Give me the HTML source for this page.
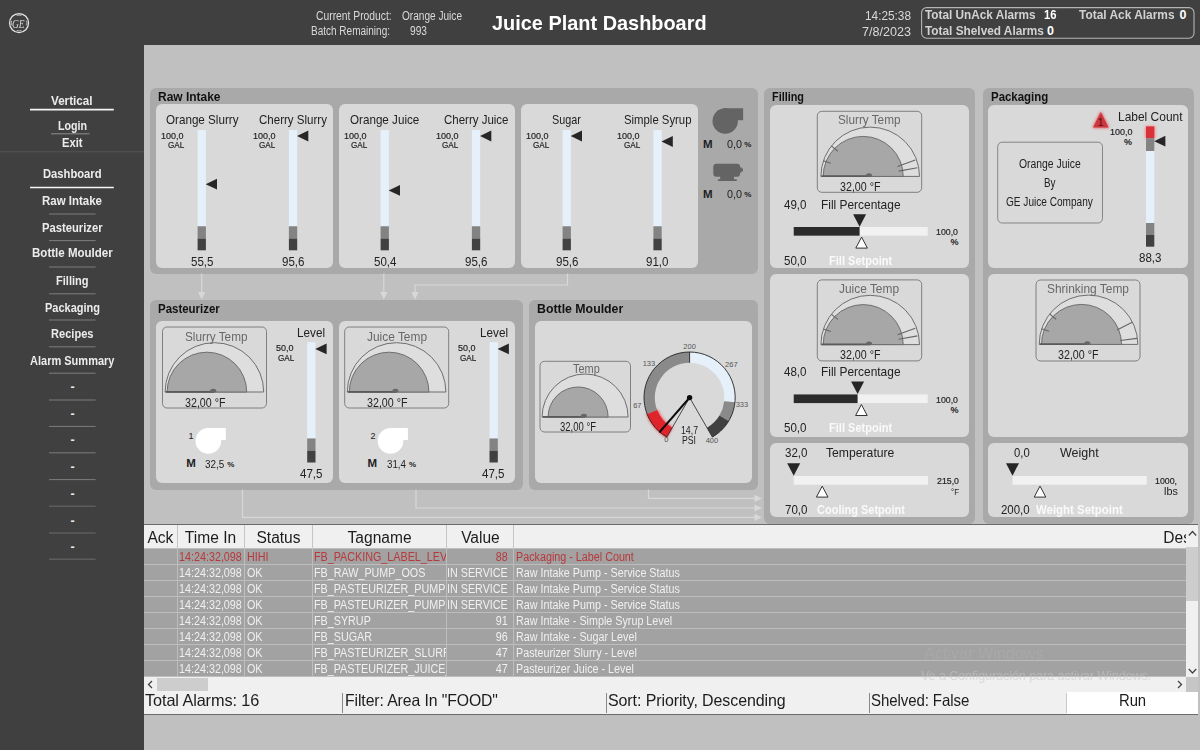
<!DOCTYPE html><html lang="en"><head><meta charset="utf-8"><title>Juice Plant Dashboard</title><style>

html,body{margin:0;padding:0;background:#c0c0c0;}
#root{position:relative;width:1200px;height:750px;overflow:hidden;background:#c0c0c0;font-family:"Liberation Sans",Arial,sans-serif;}
.b{position:absolute;}
.t{position:absolute;white-space:nowrap;line-height:1;transform-origin:0 50%;}
svg.g{position:absolute;left:0;top:0;}
#alarm{position:absolute;left:144px;top:524px;width:1054px;height:191px;background:#f0f0f0;border-top:1px solid #6a6a6a;border-bottom:1px solid #6a6a6a;box-sizing:border-box;overflow:hidden;}
table.al{position:absolute;left:0;top:0;border-collapse:collapse;table-layout:fixed;width:1042px;}
table.al th{height:23px;padding:0;font-weight:normal;font-size:17.3px;color:#1c1c1c;background:#f0f0f0;border-right:1px solid #c6c6c6;text-align:center;white-space:nowrap;overflow:hidden;line-height:23px;}
table.al th span{display:inline-block;position:relative;top:1px;transform:scaleX(0.9);vertical-align:top;height:23px;}
table.al th.de{text-align:right;border-right:none;}
table.al th.de span{margin-right:-59px;}
table.al td{height:15px;padding:0 0 0 1.5px;font-size:12.3px;line-height:15px;color:#f0f0f0;background:#a2a2a2;border-right:1px solid #bdbdbd;border-bottom:1px solid #bdbdbd;white-space:nowrap;overflow:hidden;}
table.al td span{display:inline-block;position:relative;top:0.5px;transform:scaleX(0.875);transform-origin:0 50%;vertical-align:top;height:15px;}
table.al td.vr{text-align:right;padding:0 5px 0 0;}
table.al td.vr span{transform-origin:100% 50%;}
table.al td.vl{padding-left:0;}
table.al tr.red td{color:#b8383c;}
table.al tbody tr:first-child td{border-top:1px solid #bdbdbd;height:14px;}
.sb{position:absolute;background:#f0f0f0;}
.thumb{position:absolute;background:#cdcdcd;}
.st{position:absolute;transform-origin:0 50%;top:165.3px;height:22px;line-height:20px;font-size:16.5px;color:#1c1c1c;white-space:nowrap;letter-spacing:-0.1px;}
.sep{position:absolute;top:168px;width:1px;height:20px;background:#8a8a8a;}
.chev{position:absolute;font-size:11px;line-height:1;color:#444;font-weight:bold;}
.wm{position:absolute;white-space:nowrap;color:#b4b4b4;font-size:14.5px;line-height:1;}

</style></head><body><div id="root">
<div class="b" style="left:0px;top:0px;width:1200px;height:45px;background:#404040;"></div>
<div class="b" style="left:0px;top:0px;width:144px;height:750px;background:#404040;"></div>
<div class="b" style="left:150px;top:88px;width:608px;height:185.6px;background:#a9a9a9;border-radius:6px;"></div>
<div class="b" style="left:150px;top:300px;width:372.8px;height:189.6px;background:#a9a9a9;border-radius:6px;"></div>
<div class="b" style="left:529px;top:300px;width:229px;height:189.6px;background:#a9a9a9;border-radius:6px;"></div>
<div class="b" style="left:764px;top:88px;width:210.8px;height:435.8px;background:#a9a9a9;border-radius:6px;"></div>
<div class="b" style="left:982.5px;top:88px;width:211px;height:435.8px;background:#a9a9a9;border-radius:6px;"></div>
<div class="b" style="left:156.2px;top:104px;width:176.6px;height:163.7px;background:#d9d9d9;border-radius:6px;"></div>
<div class="b" style="left:338.6px;top:104px;width:176.6px;height:163.7px;background:#d9d9d9;border-radius:6px;"></div>
<div class="b" style="left:521px;top:104px;width:176.6px;height:163.7px;background:#d9d9d9;border-radius:6px;"></div>
<div class="b" style="left:156.2px;top:320.5px;width:176.6px;height:162.5px;background:#d9d9d9;border-radius:6px;"></div>
<div class="b" style="left:338.6px;top:320.5px;width:176.6px;height:162.5px;background:#d9d9d9;border-radius:6px;"></div>
<div class="b" style="left:535px;top:320.5px;width:217px;height:162.5px;background:#d9d9d9;border-radius:6px;"></div>
<div class="b" style="left:769.8px;top:105px;width:199.2px;height:162.7px;background:#d9d9d9;border-radius:6px;"></div>
<div class="b" style="left:988.2px;top:105px;width:199.8px;height:162.7px;background:#d9d9d9;border-radius:6px;"></div>
<div class="b" style="left:769.8px;top:273.8px;width:199.2px;height:163.2px;background:#d9d9d9;border-radius:6px;"></div>
<div class="b" style="left:988.2px;top:273.8px;width:199.8px;height:163.2px;background:#d9d9d9;border-radius:6px;"></div>
<div class="b" style="left:769.8px;top:442.5px;width:199.2px;height:74.2px;background:#d9d9d9;border-radius:6px;"></div>
<div class="b" style="left:988.2px;top:442.5px;width:199.8px;height:74.2px;background:#d9d9d9;border-radius:6px;"></div>
<svg class="g" width="1200" height="750" viewBox="0 0 1200 750"><defs><filter id="glow" x="-50%" y="-50%" width="200%" height="200%"><feGaussianBlur stdDeviation="1.8"/></filter></defs>
<rect x="197.6" y="130.0" width="8.3" height="96.3" fill="#e6f0fb"/>
<rect x="197.6" y="226.3" width="8.3" height="12.2" fill="#838383"/>
<rect x="197.6" y="238.5" width="8.3" height="11.8" fill="#414141"/>
<polygon points="205.7,184.2 217.0,178.8 217.0,189.6" fill="#262626"/>
<rect x="288.9" y="130.0" width="8.3" height="96.3" fill="#e6f0fb"/>
<rect x="288.9" y="226.3" width="8.3" height="12.2" fill="#838383"/>
<rect x="288.9" y="238.5" width="8.3" height="11.8" fill="#414141"/>
<polygon points="297.0,136.0 308.3,130.6 308.3,141.4" fill="#262626"/>
<rect x="380.6" y="130.0" width="8.3" height="96.3" fill="#e6f0fb"/>
<rect x="380.6" y="226.3" width="8.3" height="12.2" fill="#838383"/>
<rect x="380.6" y="238.5" width="8.3" height="11.8" fill="#414141"/>
<polygon points="388.7,190.4 400.0,185.0 400.0,195.8" fill="#262626"/>
<rect x="471.9" y="130.0" width="8.3" height="96.3" fill="#e6f0fb"/>
<rect x="471.9" y="226.3" width="8.3" height="12.2" fill="#838383"/>
<rect x="471.9" y="238.5" width="8.3" height="11.8" fill="#414141"/>
<polygon points="480.0,136.0 491.3,130.6 491.3,141.4" fill="#262626"/>
<rect x="562.6" y="130.0" width="8.3" height="96.3" fill="#e6f0fb"/>
<rect x="562.6" y="226.3" width="8.3" height="12.2" fill="#838383"/>
<rect x="562.6" y="238.5" width="8.3" height="11.8" fill="#414141"/>
<polygon points="570.7,136.0 582.0,130.6 582.0,141.4" fill="#262626"/>
<rect x="653.4" y="130.0" width="8.3" height="96.3" fill="#e6f0fb"/>
<rect x="653.4" y="226.3" width="8.3" height="12.2" fill="#838383"/>
<rect x="653.4" y="238.5" width="8.3" height="11.8" fill="#414141"/>
<polygon points="661.5,141.5 672.8,136.1 672.8,146.9" fill="#262626"/>
<rect x="307.2" y="342.2" width="8.3" height="96.3" fill="#e6f0fb"/>
<rect x="307.2" y="438.5" width="8.3" height="12.2" fill="#838383"/>
<rect x="307.2" y="450.7" width="8.3" height="11.8" fill="#414141"/>
<polygon points="315.3,348.9 326.6,343.5 326.6,354.3" fill="#262626"/>
<rect x="489.5" y="342.2" width="8.3" height="96.3" fill="#e6f0fb"/>
<rect x="489.5" y="438.5" width="8.3" height="12.2" fill="#838383"/>
<rect x="489.5" y="450.7" width="8.3" height="11.8" fill="#414141"/>
<polygon points="497.6,348.9 508.9,343.5 508.9,354.3" fill="#262626"/>
<g filter="url(#glow)"><rect x="1145.5" y="126.4" width="9.3" height="11.8" fill="#ff7078"/></g>
<rect x="1146.0" y="126.4" width="8.3" height="11.8" fill="#d9313a"/>
<rect x="1146.0" y="138.2" width="8.3" height="12.8" fill="#838383"/>
<rect x="1146.0" y="151.0" width="8.3" height="72.0" fill="#e6f0fb"/>
<rect x="1146.0" y="223.0" width="8.3" height="12.0" fill="#838383"/>
<rect x="1146.0" y="235.0" width="8.3" height="11.7" fill="#414141"/>
<polygon points="1154.1,141.2 1165.4,135.8 1165.4,146.6" fill="#262626"/>
<rect x="162.5" y="327.0" width="104.0" height="81.0" rx="4.5" fill="#d9d9d9" stroke="#7f7f7f" stroke-width="1"/>
<path d="M165.1,392.0 A49.3,49.3 0 0 1 263.7,392.0 Z" fill="#dedede" stroke="#6e6e6e" stroke-width="1"/>
<path d="M167.1,392.0 A39.8,39.8 0 0 1 246.7,392.0 Z" fill="#a7a7a7" stroke="#6e6e6e" stroke-width="1"/>
<line x1="165.6" y1="391.8" x2="214.4" y2="391.8" stroke="#5a5a5a" stroke-width="1.8"/>
<path d="M210.0,392.0 a3.2,3.2 0 0 1 6.4,0 Z" fill="#666"/>
<rect x="344.7" y="327.0" width="104.0" height="81.0" rx="4.5" fill="#d9d9d9" stroke="#7f7f7f" stroke-width="1"/>
<path d="M347.3,392.0 A49.3,49.3 0 0 1 445.9,392.0 Z" fill="#dedede" stroke="#6e6e6e" stroke-width="1"/>
<path d="M349.3,392.0 A39.8,39.8 0 0 1 428.9,392.0 Z" fill="#a7a7a7" stroke="#6e6e6e" stroke-width="1"/>
<line x1="347.8" y1="391.8" x2="396.6" y2="391.8" stroke="#5a5a5a" stroke-width="1.8"/>
<path d="M392.2,392.0 a3.2,3.2 0 0 1 6.4,0 Z" fill="#666"/>
<rect x="540.0" y="361.3" width="90.5" height="70.7" rx="4.5" fill="#d9d9d9" stroke="#7f7f7f" stroke-width="1"/>
<path d="M542.1,417.0 A43.0,43.0 0 0 1 628.1,417.0 Z" fill="#dedede" stroke="#6e6e6e" stroke-width="1"/>
<path d="M548.1,417.0 A30.0,30.0 0 0 1 608.1,417.0 Z" fill="#a7a7a7" stroke="#6e6e6e" stroke-width="1"/>
<line x1="542.6" y1="416.8" x2="585.1" y2="416.8" stroke="#5a5a5a" stroke-width="1.8"/>
<path d="M580.7,417.0 a3.2,3.2 0 0 1 6.4,0 Z" fill="#666"/>
<rect x="817.3" y="111.3" width="104.4" height="81.0" rx="4.5" fill="#d9d9d9" stroke="#7f7f7f" stroke-width="1"/>
<path d="M820.9,176.4 A49.3,49.3 0 0 1 919.5,176.4 Z" fill="#dedede" stroke="#6e6e6e" stroke-width="1"/>
<path d="M823.2,176.4 A40.0,40.0 0 0 1 903.2,176.4 Z" fill="#a7a7a7" stroke="#6e6e6e" stroke-width="1"/>
<line x1="830.8" y1="163.2" x2="823.3" y2="160.7" stroke="#666" stroke-width="1.1"/>
<line x1="837.9" y1="151.2" x2="831.2" y2="145.9" stroke="#666" stroke-width="1.1"/>
<line x1="897.5" y1="166.5" x2="915.3" y2="160.0" stroke="#666" stroke-width="1.1"/>
<line x1="898.7" y1="171.1" x2="917.4" y2="167.7" stroke="#666" stroke-width="1.1"/>
<line x1="821.4" y1="176.2" x2="870.2" y2="176.2" stroke="#5a5a5a" stroke-width="1.8"/>
<path d="M865.8,176.4 a3.2,3.2 0 0 1 6.4,0 Z" fill="#666"/>
<rect x="817.3" y="279.9" width="104.4" height="81.0" rx="4.5" fill="#d9d9d9" stroke="#7f7f7f" stroke-width="1"/>
<path d="M820.9,344.6 A49.3,49.3 0 0 1 919.5,344.6 Z" fill="#dedede" stroke="#6e6e6e" stroke-width="1"/>
<path d="M823.2,344.6 A40.0,40.0 0 0 1 903.2,344.6 Z" fill="#a7a7a7" stroke="#6e6e6e" stroke-width="1"/>
<line x1="830.8" y1="331.4" x2="823.3" y2="328.9" stroke="#666" stroke-width="1.1"/>
<line x1="837.9" y1="319.4" x2="831.2" y2="314.1" stroke="#666" stroke-width="1.1"/>
<line x1="897.5" y1="334.7" x2="915.3" y2="328.2" stroke="#666" stroke-width="1.1"/>
<line x1="898.7" y1="339.3" x2="917.4" y2="335.9" stroke="#666" stroke-width="1.1"/>
<line x1="821.4" y1="344.4" x2="870.2" y2="344.4" stroke="#5a5a5a" stroke-width="1.8"/>
<path d="M865.8,344.6 a3.2,3.2 0 0 1 6.4,0 Z" fill="#666"/>
<rect x="1036.0" y="280.0" width="104.0" height="81.0" rx="4.5" fill="#d9d9d9" stroke="#7f7f7f" stroke-width="1"/>
<path d="M1039.2,344.4 A49.3,49.3 0 0 1 1137.8,344.4 Z" fill="#dedede" stroke="#6e6e6e" stroke-width="1"/>
<path d="M1041.5,344.4 A40.0,40.0 0 0 1 1121.5,344.4 Z" fill="#a7a7a7" stroke="#6e6e6e" stroke-width="1"/>
<line x1="1049.1" y1="331.2" x2="1041.6" y2="328.7" stroke="#666" stroke-width="1.1"/>
<line x1="1056.2" y1="319.2" x2="1049.5" y2="313.9" stroke="#666" stroke-width="1.1"/>
<line x1="1117.0" y1="329.9" x2="1132.2" y2="322.2" stroke="#666" stroke-width="1.1"/>
<line x1="1120.3" y1="340.5" x2="1137.1" y2="338.4" stroke="#666" stroke-width="1.1"/>
<line x1="1039.7" y1="344.2" x2="1088.5" y2="344.2" stroke="#5a5a5a" stroke-width="1.8"/>
<path d="M1084.1,344.4 a3.2,3.2 0 0 1 6.4,0 Z" fill="#666"/>
<rect x="793.7" y="227.0" width="134.0" height="8.7" fill="#f1f1f1"/>
<rect x="793.7" y="227.0" width="65.9" height="8.7" fill="#2b2b2b"/>
<polygon points="853.1,214.2 866.1,214.2 859.6,226.7" fill="#262626"/>
<polygon points="861.6,237.1 867.4,248.1 855.8,248.1" fill="#fff" stroke="#333" stroke-width="1"/>
<rect x="793.7" y="394.4" width="134.0" height="8.7" fill="#f1f1f1"/>
<rect x="793.7" y="394.4" width="63.9" height="8.7" fill="#2b2b2b"/>
<polygon points="851.1,381.6 864.1,381.6 857.6,394.1" fill="#262626"/>
<polygon points="861.4,404.5 867.2,415.5 855.6,415.5" fill="#fff" stroke="#333" stroke-width="1"/>
<rect x="793.7" y="476.0" width="134.3" height="8.7" fill="#f1f1f1"/>
<polygon points="787.2,463.2 800.2,463.2 793.7,475.7" fill="#262626"/>
<polygon points="822.2,486.1 828.0,497.1 816.4,497.1" fill="#fff" stroke="#333" stroke-width="1"/>
<rect x="1012.5" y="476.0" width="134.3" height="8.7" fill="#f1f1f1"/>
<polygon points="1006.0,463.2 1019.0,463.2 1012.5,475.7" fill="#262626"/>
<polygon points="1040.0,486.1 1045.8,497.1 1034.2,497.1" fill="#fff" stroke="#333" stroke-width="1"/>
<circle cx="725.2" cy="121.0" r="12.7" fill="#646464"/>
<path d="M723.2,108.3 H743.1 V120.2 H731.6 Z" fill="#646464"/>
<path d="M716.5,163.7 h20.9 q2.6,0 2.6,2.6 v1 h1.6 v1.2 h1.4 v2.8 h-1.4 v1.2 h-1.6 v1.6 q0,2.6 -2.6,2.6 h-3.4 v2.6 h2.7 v1.8 h-18.8 v-1.8 h2.3 v-2.6 h-3.7 q-3.2,0 -3.2,-3.2 v-6.6 q0,-3.2 3.2,-3.2 Z" fill="#646464"/>
<circle cx="208.3" cy="440.9" r="12.8" fill="#ffffff"/>
<path d="M206.3,428.0 H225.8 V440.1 H214.8 Z" fill="#ffffff"/>
<circle cx="390.5" cy="440.9" r="12.8" fill="#ffffff"/>
<path d="M388.5,428.0 H407.9 V440.1 H396.9 Z" fill="#ffffff"/>
<circle cx="689.6" cy="397.6" r="18" fill="none" stroke="#ff2020" stroke-opacity="0" />
<g filter="url(#glow)">
<path d="M666.55,437.52 A46.1,46.1 0 0 1 646.56,414.12 L657.58,409.89 A34.3,34.3 0 0 0 672.45,427.30 Z" fill="#f03038"/>
</g>
<path d="M666.80,437.09 A45.6,45.6 0 0 1 647.03,413.94 L657.11,410.07 A34.8,34.8 0 0 0 672.20,427.74 Z" fill="#e0242c"/>
<path d="M647.03,413.94 A45.6,45.6 0 0 1 689.60,352.00 L689.60,362.80 A34.8,34.8 0 0 0 657.11,410.07 Z" fill="#8a8a8a"/>
<path d="M689.60,352.00 A45.6,45.6 0 0 1 734.95,402.37 L724.21,401.24 A34.8,34.8 0 0 0 689.60,362.80 Z" fill="#e6f0fb"/>
<path d="M734.95,402.37 A45.6,45.6 0 0 1 728.69,421.09 L719.43,415.52 A34.8,34.8 0 0 0 724.21,401.24 Z" fill="#8a8a8a"/>
<path d="M728.69,421.09 A45.6,45.6 0 0 1 712.40,437.09 L707.00,427.74 A34.8,34.8 0 0 0 719.43,415.52 Z" fill="#414141"/>
<path d="M666.80,437.09 A45.6,45.6 0 1 1 712.40,437.09" fill="none" stroke="#222" stroke-width="0.9"/>
<line x1="689.6" y1="352.0" x2="689.6" y2="362.8" stroke="#222" stroke-width="0.9"/>
<line x1="689.6" y1="397.6" x2="666.8" y2="437.1" stroke="#222" stroke-width="0.8"/>
<line x1="689.6" y1="397.6" x2="712.4" y2="437.1" stroke="#222" stroke-width="0.8"/>
<line x1="689.6" y1="397.6" x2="660.0" y2="431.6" stroke="#0c0c0c" stroke-width="2.2" stroke-linecap="round"/>
<circle cx="689.6" cy="397.6" r="2.7" fill="#0c0c0c"/>
<rect x="997.7" y="142.2" width="104.8" height="80.8" rx="4.5" fill="#d9d9d9" stroke="#858585"/>
<g filter="url(#glow)"><polygon points="1100.8,111.5 1109,127.8 1092.6,127.8" fill="#e8454c"/></g>
<polygon points="1100.8,112 1108.6,127.6 1093,127.6" fill="#cc363e"/>
<polyline points="201.7,273.6 201.7,294.0" fill="none" stroke="#d8d8d8" stroke-width="1.2"/>
<polygon points="198.1,292.0 205.3,292.0 201.7,299.5" fill="#d8d8d8"/>
<polyline points="383.8,273.6 383.8,294.0" fill="none" stroke="#d8d8d8" stroke-width="1.2"/>
<polygon points="380.2,292.0 387.4,292.0 383.8,299.5" fill="#d8d8d8"/>
<polyline points="567.5,273.6 567.5,285.0 415.0,285.0 415.0,294.0" fill="none" stroke="#d8d8d8" stroke-width="1.2"/>
<polygon points="411.4,292.0 418.6,292.0 415.0,299.5" fill="#d8d8d8"/>
<polyline points="648.5,489.6 648.5,498.4 755.0,498.4" fill="none" stroke="#d8d8d8" stroke-width="1.2"/>
<polygon points="754.5,494.8 754.5,502.0 762.0,498.4" fill="#d8d8d8"/>
<polyline points="416.0,489.6 416.0,508.0 755.0,508.0" fill="none" stroke="#d8d8d8" stroke-width="1.2"/>
<polygon points="754.5,504.4 754.5,511.6 762.0,508.0" fill="#d8d8d8"/>
<polyline points="242.5,489.6 242.5,517.3 755.0,517.3" fill="none" stroke="#d8d8d8" stroke-width="1.2"/>
<polygon points="754.5,513.7 754.5,520.9 762.0,517.3" fill="#d8d8d8"/>
<rect x="921.6" y="7.6" width="272.4" height="30.6" rx="5" fill="none" stroke="#b4b4b4" stroke-width="1.1"/>
<circle cx="19.05" cy="23" r="9.5" fill="none" stroke="#e4e4e4" stroke-width="1.25"/>
<path d="M16.74,15.45 A7.9,7.9 0 0 1 21.36,15.45" fill="none" stroke="#d8d8d8" stroke-width="0.8"/>
<path d="M26.60,20.69 A7.9,7.9 0 0 1 26.60,25.31" fill="none" stroke="#d8d8d8" stroke-width="0.8"/>
<path d="M21.36,30.55 A7.9,7.9 0 0 1 16.74,30.55" fill="none" stroke="#d8d8d8" stroke-width="0.8"/>
<path d="M11.50,25.31 A7.9,7.9 0 0 1 11.50,20.69" fill="none" stroke="#d8d8d8" stroke-width="0.8"/>
<line x1="30.0" y1="109.6" x2="113.8" y2="109.6" stroke="#f4f4f4" stroke-width="1.6"/>
<line x1="51.0" y1="133.8" x2="89.5" y2="133.8" stroke="#8c8c8c" stroke-width="1.0"/>
<line x1="0.0" y1="151.8" x2="144.0" y2="151.8" stroke="#565656" stroke-width="1.0"/>
<line x1="30.0" y1="187.5" x2="113.8" y2="187.5" stroke="#f4f4f4" stroke-width="1.6"/>
<line x1="49.0" y1="214.0" x2="95.6" y2="214.0" stroke="#7d7d7d" stroke-width="1.0"/>
<line x1="49.0" y1="240.6" x2="95.6" y2="240.6" stroke="#7d7d7d" stroke-width="1.0"/>
<line x1="49.0" y1="267.0" x2="95.6" y2="267.0" stroke="#7d7d7d" stroke-width="1.0"/>
<line x1="49.0" y1="293.8" x2="95.6" y2="293.8" stroke="#7d7d7d" stroke-width="1.0"/>
<line x1="49.0" y1="320.0" x2="95.6" y2="320.0" stroke="#7d7d7d" stroke-width="1.0"/>
<line x1="49.0" y1="346.8" x2="95.6" y2="346.8" stroke="#7d7d7d" stroke-width="1.0"/>
<line x1="49.0" y1="373.2" x2="95.6" y2="373.2" stroke="#7d7d7d" stroke-width="1.0"/>
<line x1="49.0" y1="400.0" x2="95.6" y2="400.0" stroke="#7d7d7d" stroke-width="1.0"/>
<line x1="49.0" y1="426.4" x2="95.6" y2="426.4" stroke="#7d7d7d" stroke-width="1.0"/>
<line x1="49.0" y1="452.8" x2="95.6" y2="452.8" stroke="#7d7d7d" stroke-width="1.0"/>
<line x1="49.0" y1="479.6" x2="95.6" y2="479.6" stroke="#7d7d7d" stroke-width="1.0"/>
<line x1="49.0" y1="506.2" x2="95.6" y2="506.2" stroke="#6a6a6a" stroke-width="1.0"/>
<line x1="49.0" y1="533.0" x2="95.6" y2="533.0" stroke="#6a6a6a" stroke-width="1.0"/>
<line x1="49.0" y1="559.2" x2="95.6" y2="559.2" stroke="#6a6a6a" stroke-width="1.0"/>
</svg>
<div class="t" style="left:158.4px;top:90.9px;font-size:12.5px;color:#111;font-weight:bold;transform:scaleX(0.957);">Raw Intake</div>
<div class="t" style="left:158.4px;top:302.8px;font-size:12.5px;color:#111;font-weight:bold;transform:scaleX(0.917);">Pasteurizer</div>
<div class="t" style="left:537.4px;top:302.8px;font-size:12.5px;color:#111;font-weight:bold;transform:scaleX(0.986);">Bottle Moulder</div>
<div class="t" style="left:772.4px;top:90.9px;font-size:12.5px;color:#111;font-weight:bold;transform:scaleX(0.869);">Filling</div>
<div class="t" style="left:990.9px;top:90.9px;font-size:12.5px;color:#111;font-weight:bold;transform:scaleX(0.916);">Packaging</div>
<div class="t" style="left:161.3px;top:131.7px;font-size:9.2px;color:#222;transform:scaleX(0.978);-webkit-text-stroke:0.18px #222;">100,0</div>
<div class="t" style="left:168.0px;top:141.3px;font-size:9.2px;color:#222;transform:scaleX(0.886);-webkit-text-stroke:0.18px #222;">GAL</div>
<div class="t" style="left:190.5px;top:254.7px;font-size:13px;color:#222;transform:scaleX(0.889);">55,5</div>
<div class="t" style="left:165.5px;top:113.4px;font-size:13px;color:#222;transform:scaleX(0.896);">Orange Slurry</div>
<div class="t" style="left:252.6px;top:131.7px;font-size:9.2px;color:#222;transform:scaleX(0.978);-webkit-text-stroke:0.18px #222;">100,0</div>
<div class="t" style="left:259.3px;top:141.3px;font-size:9.2px;color:#222;transform:scaleX(0.886);-webkit-text-stroke:0.18px #222;">GAL</div>
<div class="t" style="left:281.8px;top:254.7px;font-size:13px;color:#222;transform:scaleX(0.889);">95,6</div>
<div class="t" style="left:259.0px;top:113.4px;font-size:13px;color:#222;transform:scaleX(0.888);">Cherry Slurry</div>
<div class="t" style="left:344.3px;top:131.7px;font-size:9.2px;color:#222;transform:scaleX(0.978);-webkit-text-stroke:0.18px #222;">100,0</div>
<div class="t" style="left:351.0px;top:141.3px;font-size:9.2px;color:#222;transform:scaleX(0.886);-webkit-text-stroke:0.18px #222;">GAL</div>
<div class="t" style="left:373.5px;top:254.7px;font-size:13px;color:#222;transform:scaleX(0.889);">50,4</div>
<div class="t" style="left:350.1px;top:113.4px;font-size:13px;color:#222;transform:scaleX(0.896);">Orange Juice</div>
<div class="t" style="left:435.6px;top:131.7px;font-size:9.2px;color:#222;transform:scaleX(0.978);-webkit-text-stroke:0.18px #222;">100,0</div>
<div class="t" style="left:442.3px;top:141.3px;font-size:9.2px;color:#222;transform:scaleX(0.886);-webkit-text-stroke:0.18px #222;">GAL</div>
<div class="t" style="left:464.8px;top:254.7px;font-size:13px;color:#222;transform:scaleX(0.889);">95,6</div>
<div class="t" style="left:443.8px;top:113.4px;font-size:13px;color:#222;transform:scaleX(0.884);">Cherry Juice</div>
<div class="t" style="left:526.3px;top:131.7px;font-size:9.2px;color:#222;transform:scaleX(0.978);-webkit-text-stroke:0.18px #222;">100,0</div>
<div class="t" style="left:533.0px;top:141.3px;font-size:9.2px;color:#222;transform:scaleX(0.886);-webkit-text-stroke:0.18px #222;">GAL</div>
<div class="t" style="left:555.5px;top:254.7px;font-size:13px;color:#222;transform:scaleX(0.889);">95,6</div>
<div class="t" style="left:552.4px;top:113.4px;font-size:13px;color:#222;transform:scaleX(0.830);">Sugar</div>
<div class="t" style="left:617.1px;top:131.7px;font-size:9.2px;color:#222;transform:scaleX(0.978);-webkit-text-stroke:0.18px #222;">100,0</div>
<div class="t" style="left:623.8px;top:141.3px;font-size:9.2px;color:#222;transform:scaleX(0.886);-webkit-text-stroke:0.18px #222;">GAL</div>
<div class="t" style="left:646.3px;top:254.7px;font-size:13px;color:#222;transform:scaleX(0.889);">91,0</div>
<div class="t" style="left:623.8px;top:113.4px;font-size:13px;color:#222;transform:scaleX(0.873);">Simple Syrup</div>
<div class="t" style="left:275.9px;top:343.9px;font-size:9.2px;color:#222;transform:scaleX(0.978);-webkit-text-stroke:0.18px #222;">50,0</div>
<div class="t" style="left:277.6px;top:353.5px;font-size:9.2px;color:#222;transform:scaleX(0.886);-webkit-text-stroke:0.18px #222;">GAL</div>
<div class="t" style="left:300.1px;top:466.9px;font-size:13px;color:#222;transform:scaleX(0.889);">47,5</div>
<div class="t" style="left:297.2px;top:326.4px;font-size:13px;color:#222;transform:scaleX(0.901);">Level</div>
<div class="t" style="left:458.2px;top:343.9px;font-size:9.2px;color:#222;transform:scaleX(0.978);-webkit-text-stroke:0.18px #222;">50,0</div>
<div class="t" style="left:459.9px;top:353.5px;font-size:9.2px;color:#222;transform:scaleX(0.886);-webkit-text-stroke:0.18px #222;">GAL</div>
<div class="t" style="left:482.4px;top:466.9px;font-size:13px;color:#222;transform:scaleX(0.889);">47,5</div>
<div class="t" style="left:479.5px;top:326.4px;font-size:13px;color:#222;transform:scaleX(0.901);">Level</div>
<div class="t" style="left:1109.7px;top:128.1px;font-size:9.2px;color:#222;transform:scaleX(0.978);-webkit-text-stroke:0.18px #222;">100,0</div>
<div class="t" style="left:1124.0px;top:137.8px;font-size:9px;color:#222;font-weight:bold;">%</div>
<div class="t" style="left:1138.9px;top:251.1px;font-size:13px;color:#222;transform:scaleX(0.889);">88,3</div>
<div class="t" style="left:1117.5px;top:110.3px;font-size:13px;color:#222;transform:scaleX(0.920);">Label Count</div>
<div class="t" style="left:184.6px;top:329.7px;font-size:13px;color:#686868;transform:scaleX(0.904);">Slurry Temp</div>
<div class="t" style="left:185.2px;top:396.3px;font-size:13px;color:#222;transform:scaleX(0.822);">32,00 °F</div>
<div class="t" style="left:367.2px;top:329.7px;font-size:13px;color:#686868;transform:scaleX(0.916);">Juice Temp</div>
<div class="t" style="left:367.4px;top:396.3px;font-size:13px;color:#222;transform:scaleX(0.822);">32,00 °F</div>
<div class="t" style="left:573.2px;top:361.7px;font-size:13px;color:#686868;transform:scaleX(0.843);">Temp</div>
<div class="t" style="left:560.4px;top:420.2px;font-size:13px;color:#222;transform:scaleX(0.730);">32,00 °F</div>
<div class="t" style="left:837.5px;top:113.2px;font-size:13px;color:#686868;transform:scaleX(0.904);">Slurry Temp</div>
<div class="t" style="left:840.0px;top:179.9px;font-size:13px;color:#222;transform:scaleX(0.822);">32,00 °F</div>
<div class="t" style="left:839.0px;top:281.8px;font-size:13px;color:#686868;transform:scaleX(0.916);">Juice Temp</div>
<div class="t" style="left:840.0px;top:348.1px;font-size:13px;color:#222;transform:scaleX(0.822);">32,00 °F</div>
<div class="t" style="left:1046.7px;top:281.9px;font-size:13px;color:#686868;transform:scaleX(0.917);">Shrinking Temp</div>
<div class="t" style="left:1058.0px;top:347.9px;font-size:13px;color:#222;transform:scaleX(0.822);">32,00 °F</div>
<div class="t" style="left:784.3px;top:197.8px;font-size:13.5px;color:#222;transform:scaleX(0.856);">49,0</div>
<div class="t" style="left:820.5px;top:198.0px;font-size:13.5px;color:#222;transform:scaleX(0.883);">Fill Percentage</div>
<div class="t" style="left:784.3px;top:254.0px;font-size:13.5px;color:#222;transform:scaleX(0.856);">50,0</div>
<div class="t" style="left:829.3px;top:254.0px;font-size:13.5px;color:#fafafa;font-weight:bold;transform:scaleX(0.818);">Fill Setpoint</div>
<div class="t" style="left:936.4px;top:227.2px;font-size:9.5px;color:#222;transform:scaleX(0.925);-webkit-text-stroke:0.18px #222;">100,0</div>
<div class="t" style="left:950.4px;top:238.2px;font-size:9px;color:#222;font-weight:bold;">%</div>
<div class="t" style="left:784.3px;top:365.1px;font-size:13.5px;color:#222;transform:scaleX(0.856);">48,0</div>
<div class="t" style="left:820.5px;top:365.3px;font-size:13.5px;color:#222;transform:scaleX(0.883);">Fill Percentage</div>
<div class="t" style="left:784.3px;top:421.3px;font-size:13.5px;color:#222;transform:scaleX(0.856);">50,0</div>
<div class="t" style="left:829.3px;top:421.3px;font-size:13.5px;color:#fafafa;font-weight:bold;transform:scaleX(0.818);">Fill Setpoint</div>
<div class="t" style="left:936.4px;top:394.5px;font-size:9.5px;color:#222;transform:scaleX(0.925);-webkit-text-stroke:0.18px #222;">100,0</div>
<div class="t" style="left:950.4px;top:405.6px;font-size:9px;color:#222;font-weight:bold;">%</div>
<div class="t" style="left:784.9px;top:445.8px;font-size:13.5px;color:#222;transform:scaleX(0.856);">32,0</div>
<div class="t" style="left:826.0px;top:445.9px;font-size:13.5px;color:#222;transform:scaleX(0.902);">Temperature</div>
<div class="t" style="left:784.9px;top:502.9px;font-size:13.5px;color:#222;transform:scaleX(0.856);">70,0</div>
<div class="t" style="left:817.0px;top:502.9px;font-size:13.5px;color:#fafafa;font-weight:bold;transform:scaleX(0.815);">Cooling Setpoint</div>
<div class="t" style="left:937.0px;top:476.1px;font-size:9.5px;color:#222;transform:scaleX(0.925);-webkit-text-stroke:0.18px #222;">215,0</div>
<div class="t" style="left:951.0px;top:486.9px;font-size:9.5px;color:#222;transform:scaleX(0.833);">°F</div>
<div class="t" style="left:1013.7px;top:445.8px;font-size:13.5px;color:#222;transform:scaleX(0.836);">0,0</div>
<div class="t" style="left:1059.7px;top:445.9px;font-size:13.5px;color:#222;transform:scaleX(0.926);">Weight</div>
<div class="t" style="left:1000.7px;top:502.9px;font-size:13.5px;color:#222;transform:scaleX(0.849);">200,0</div>
<div class="t" style="left:1036.0px;top:502.9px;font-size:13.5px;color:#fafafa;font-weight:bold;transform:scaleX(0.847);">Weight Setpoint</div>
<div class="t" style="left:1155.4px;top:476.1px;font-size:9.5px;color:#222;transform:scaleX(0.925);-webkit-text-stroke:0.18px #222;">1000,</div>
<div class="t" style="left:1163.6px;top:486.4px;font-size:10.5px;color:#222;transform:scaleX(1.027);">lbs</div>
<div class="t" style="left:703.0px;top:139.1px;font-size:11.5px;color:#222;font-weight:bold;">M</div>
<div class="t" style="left:727.0px;top:139.4px;font-size:11.5px;color:#222;transform:scaleX(0.938);">0,0</div>
<div class="t" style="left:744.3px;top:141.4px;font-size:8px;color:#222;font-weight:bold;">%</div>
<div class="t" style="left:703.0px;top:188.6px;font-size:11.5px;color:#222;font-weight:bold;">M</div>
<div class="t" style="left:727.0px;top:188.9px;font-size:11.5px;color:#222;transform:scaleX(0.938);">0,0</div>
<div class="t" style="left:744.3px;top:190.9px;font-size:8px;color:#222;font-weight:bold;">%</div>
<div class="t" style="left:188.6px;top:431.7px;font-size:9px;color:#222;">1</div>
<div class="t" style="left:370.6px;top:431.7px;font-size:9px;color:#222;">2</div>
<div class="t" style="left:186.3px;top:457.6px;font-size:11.5px;color:#222;font-weight:bold;">M</div>
<div class="t" style="left:205.0px;top:458.6px;font-size:11.5px;color:#222;transform:scaleX(0.862);">32,5</div>
<div class="t" style="left:227.2px;top:460.7px;font-size:8px;color:#222;font-weight:bold;">%</div>
<div class="t" style="left:367.6px;top:457.6px;font-size:11.5px;color:#222;font-weight:bold;">M</div>
<div class="t" style="left:387.0px;top:458.6px;font-size:11.5px;color:#222;transform:scaleX(0.849);">31,4</div>
<div class="t" style="left:409.0px;top:460.7px;font-size:8px;color:#222;font-weight:bold;">%</div>
<div class="t" style="left:683.3px;top:342.6px;font-size:7.5px;color:#555;">200</div>
<div class="t" style="left:642.7px;top:360.2px;font-size:7.5px;color:#555;">133</div>
<div class="t" style="left:633.2px;top:401.6px;font-size:7.5px;color:#555;">67</div>
<div class="t" style="left:664.3px;top:436.4px;font-size:7.5px;color:#555;">0</div>
<div class="t" style="left:705.7px;top:436.6px;font-size:7.5px;color:#555;">400</div>
<div class="t" style="left:725.1px;top:360.6px;font-size:7.5px;color:#555;">267</div>
<div class="t" style="left:735.7px;top:401.0px;font-size:7.5px;color:#555;">333</div>
<div class="t" style="left:680.5px;top:424.8px;font-size:10.5px;color:#222;transform:scaleX(0.832);">14,7</div>
<div class="t" style="left:682.0px;top:434.8px;font-size:10.5px;color:#222;transform:scaleX(0.827);">PSI</div>
<div class="t" style="left:1018.6px;top:158.4px;font-size:12px;color:#222;transform:scaleX(0.864);">Orange Juice</div>
<div class="t" style="left:1043.7px;top:177.2px;font-size:12px;color:#222;transform:scaleX(0.821);">By</div>
<div class="t" style="left:1006.0px;top:196.0px;font-size:12px;color:#222;transform:scaleX(0.840);">GE Juice Company</div>
<div class="t" style="left:1097.5px;top:116.8px;font-size:11px;color:#5e1015;">1</div>
<div class="t" style="left:315.5px;top:10.2px;font-size:12px;color:#d9d9d9;transform:scaleX(0.860);">Current Product:</div>
<div class="t" style="left:401.8px;top:10.2px;font-size:12px;color:#d9d9d9;transform:scaleX(0.841);">Orange Juice</div>
<div class="t" style="left:311.4px;top:25.2px;font-size:12px;color:#d9d9d9;transform:scaleX(0.834);">Batch Remaining:</div>
<div class="t" style="left:410.0px;top:25.2px;font-size:12px;color:#d9d9d9;transform:scaleX(0.849);">993</div>
<div class="t" style="left:491.7px;top:12.5px;font-size:20.5px;color:#ffffff;font-weight:bold;transform:scaleX(0.971);">Juice Plant Dashboard</div>
<div class="t" style="left:864.5px;top:8.9px;font-size:13px;color:#d9d9d9;transform:scaleX(0.909);">14:25:38</div>
<div class="t" style="left:861.5px;top:24.5px;font-size:13px;color:#d9d9d9;transform:scaleX(0.968);">7/8/2023</div>
<div class="t" style="left:925.0px;top:9.2px;font-size:12.5px;color:#d2d2d2;font-weight:bold;transform:scaleX(0.942);">Total UnAck Alarms</div>
<div class="t" style="left:1044.0px;top:9.2px;font-size:12.5px;color:#fff;font-weight:bold;transform:scaleX(0.899);">16</div>
<div class="t" style="left:1079.4px;top:9.2px;font-size:12.5px;color:#d2d2d2;font-weight:bold;transform:scaleX(0.953);">Total Ack Alarms</div>
<div class="t" style="left:1179.6px;top:9.2px;font-size:12.5px;color:#fff;font-weight:bold;">0</div>
<div class="t" style="left:925.0px;top:24.8px;font-size:12.5px;color:#d2d2d2;font-weight:bold;transform:scaleX(0.946);">Total Shelved Alarms</div>
<div class="t" style="left:1047.0px;top:24.8px;font-size:12.5px;color:#fff;font-weight:bold;">0</div>
<div class="t" style="left:12.1px;top:17.0px;font-size:13.5px;color:#dcdcdc;transform:scaleX(0.700);font-family:'Liberation Serif',serif;font-style:italic;">GE</div>
<div class="t" style="left:51.2px;top:94.8px;font-size:12.5px;color:#ececec;font-weight:bold;transform:scaleX(0.933);">Vertical</div>
<div class="t" style="left:57.5px;top:119.8px;font-size:12.5px;color:#ececec;font-weight:bold;transform:scaleX(0.853);">Login</div>
<div class="t" style="left:61.8px;top:137.2px;font-size:12.5px;color:#ececec;font-weight:bold;transform:scaleX(0.894);">Exit</div>
<div class="t" style="left:42.8px;top:168.2px;font-size:12.5px;color:#ececec;font-weight:bold;transform:scaleX(0.896);">Dashboard</div>
<div class="t" style="left:42.0px;top:195.0px;font-size:12.5px;color:#ececec;font-weight:bold;transform:scaleX(0.919);">Raw Intake</div>
<div class="t" style="left:41.8px;top:221.8px;font-size:12.5px;color:#ececec;font-weight:bold;transform:scaleX(0.898);">Pasteurizer</div>
<div class="t" style="left:31.6px;top:247.3px;font-size:12.5px;color:#ececec;font-weight:bold;transform:scaleX(0.923);">Bottle Moulder</div>
<div class="t" style="left:55.8px;top:274.8px;font-size:12.5px;color:#ececec;font-weight:bold;transform:scaleX(0.883);">Filling</div>
<div class="t" style="left:44.5px;top:301.5px;font-size:12.5px;color:#ececec;font-weight:bold;transform:scaleX(0.880);">Packaging</div>
<div class="t" style="left:50.8px;top:327.8px;font-size:12.5px;color:#ececec;font-weight:bold;transform:scaleX(0.886);">Recipes</div>
<div class="t" style="left:29.8px;top:354.9px;font-size:12.5px;color:#ececec;font-weight:bold;transform:scaleX(0.881);">Alarm Summary</div>
<div class="t" style="left:70.5px;top:381.4px;font-size:12.5px;color:#ececec;font-weight:bold;">-</div>
<div class="t" style="left:70.5px;top:408.1px;font-size:12.5px;color:#ececec;font-weight:bold;">-</div>
<div class="t" style="left:70.5px;top:434.4px;font-size:12.5px;color:#ececec;font-weight:bold;">-</div>
<div class="t" style="left:70.5px;top:461.1px;font-size:12.5px;color:#ececec;font-weight:bold;">-</div>
<div class="t" style="left:70.5px;top:487.9px;font-size:12.5px;color:#ececec;font-weight:bold;">-</div>
<div class="t" style="left:70.5px;top:514.8px;font-size:12.5px;color:#ececec;font-weight:bold;">-</div>
<div class="t" style="left:70.5px;top:540.8px;font-size:12.5px;color:#ececec;font-weight:bold;">-</div>
<div id="alarm">
<table class="al"><colgroup><col style="width:33px"><col style="width:67.5px"><col style="width:67.5px"><col style="width:134.5px"><col style="width:67px"><col style="width:672.5px"></colgroup>
<thead><tr><th><span>Ack</span></th><th><span>Time In</span></th><th><span>Status</span></th><th><span>Tagname</span></th><th><span>Value</span></th><th class="de"><span>Description</span></th></tr></thead><tbody>
<tr class="red"><td></td><td><span>14:24:32,098</span></td><td><span>HIHI</span></td><td><span>FB_PACKING_LABEL_LEVEL</span></td><td class="vr"><span>88</span></td><td><span>Packaging - Label Count</span></td></tr>
<tr><td></td><td><span>14:24:32,098</span></td><td><span>OK</span></td><td><span>FB_RAW_PUMP_OOS</span></td><td class="vl"><span>IN SERVICE</span></td><td><span>Raw Intake Pump - Service Status</span></td></tr>
<tr><td></td><td><span>14:24:32,098</span></td><td><span>OK</span></td><td><span>FB_PASTEURIZER_PUMP1_OOS</span></td><td class="vl"><span>IN SERVICE</span></td><td><span>Raw Intake Pump - Service Status</span></td></tr>
<tr><td></td><td><span>14:24:32,098</span></td><td><span>OK</span></td><td><span>FB_PASTEURIZER_PUMP2_OOS</span></td><td class="vl"><span>IN SERVICE</span></td><td><span>Raw Intake Pump - Service Status</span></td></tr>
<tr><td></td><td><span>14:24:32,098</span></td><td><span>OK</span></td><td><span>FB_SYRUP</span></td><td class="vr"><span>91</span></td><td><span>Raw Intake - Simple Syrup Level</span></td></tr>
<tr><td></td><td><span>14:24:32,098</span></td><td><span>OK</span></td><td><span>FB_SUGAR</span></td><td class="vr"><span>96</span></td><td><span>Raw Intake - Sugar Level</span></td></tr>
<tr><td></td><td><span>14:24:32,098</span></td><td><span>OK</span></td><td><span>FB_PASTEURIZER_SLURRY_LEVEL</span></td><td class="vr"><span>47</span></td><td><span>Pasteurizer Slurry - Level</span></td></tr>
<tr><td></td><td><span>14:24:32,098</span></td><td><span>OK</span></td><td><span>FB_PASTEURIZER_JUICE_LEVEL</span></td><td class="vr"><span>47</span></td><td><span>Pasteurizer Juice - Level</span></td></tr>
</tbody></table>
<div class="sb" style="left:1042px;top:0;width:12px;height:152px;"></div>
<div class="thumb" style="left:1042px;top:21.5px;width:12px;height:54px;"></div>
<svg style="position:absolute;left:1041.5px;top:0" width="13" height="152"><polyline points="2.8,10.5 6.5,6.5 10.2,10.5" fill="none" stroke="#444" stroke-width="1.3"/><polyline points="2.8,144 6.5,148 10.2,144" fill="none" stroke="#444" stroke-width="1.3"/></svg>
<div class="sb" style="left:0;top:152px;width:1054px;height:15px;"></div>
<div class="thumb" style="left:12.5px;top:153px;width:51px;height:13px;"></div>
<div class="thumb" style="left:1042px;top:152px;width:12px;height:15px;background:#c6c6c6"></div>
<svg style="position:absolute;left:0;top:152px" width="1054" height="15"><polyline points="8,4 4.5,7.5 8,11" fill="none" stroke="#444" stroke-width="1.3"/><polyline points="1034,4 1037.5,7.5 1034,11" fill="none" stroke="#444" stroke-width="1.3"/></svg>
<div class="st" style="left:1px;transform:scaleX(0.986)">Total Alarms: 16</div><div class="sep" style="left:198px"></div>
<div class="st" style="left:201px;transform:scaleX(0.956)">Filter: Area In "FOOD"</div><div class="sep" style="left:462px"></div>
<div class="st" style="left:464px;transform:scaleX(0.969)">Sort: Priority, Descending</div><div class="sep" style="left:725px"></div>
<div class="st" style="left:727px;transform:scaleX(0.911)">Shelved: False</div>
<div class="b" style="left:923px;top:167px;width:131px;height:23px;background:#fff"></div><div class="st" style="left:923px;width:131px;text-align:center;transform:scaleX(0.9);transform-origin:50% 50%">Run</div><div class="sep" style="left:922px;background:#c8c8c8"></div>
</div>
<div class="wm" style="left:924px;top:645px;color:rgba(205,205,205,0.16);font-size:16.2px;">Activar Windows</div>
<div class="wm" style="left:921px;top:670px;color:rgba(200,200,200,0.6);font-size:12.4px;">Ve a Configuración para activar Windows.</div>
</div></body></html>
